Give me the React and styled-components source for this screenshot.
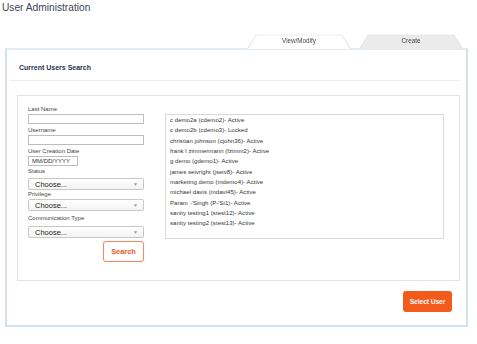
import React from "react";
import styled, { createGlobalStyle } from "styled-components";

const Global = createGlobalStyle`
  html, body { margin: 0; padding: 0; background: #fff; }
  body { font-family: "Liberation Sans", Arial, sans-serif; color: #333; }
  * { box-sizing: border-box; }
`;

const Page = styled.div`
  width: 477px;
  height: 344px;
  position: relative;
  overflow: hidden;
`;

const Title = styled.h1`
  margin: 0;
  padding: 1px 0 0 2px;
  height: 31px;
  font-size: 10.2px;
  line-height: 13px;
  font-weight: normal;
  color: #3b4657;
`;

const TabBar = styled.div`
  display: flex;
  justify-content: flex-end;
  gap: 8px;
  padding-right: 14px;
  height: 18px;
  position: relative;
  z-index: 1;
`;

const Tab = styled.div`
  position: relative;
  width: 104px;
  height: 18px;
  display: flex;
  align-items: center;
  justify-content: center;
  font-size: 6.3px;
  color: #444;
  padding-top: 1px;
  isolation: isolate;
  &::before {
    content: "";
    position: absolute;
    inset: 0;
    z-index: -1;
    background: ${(p) => (p.$active ? "#ffffff" : "#ebebeb")};
    border: 1px solid ${(p) => (p.$active ? "#e0e0e0" : "#dedede")};
    border-bottom: none;
    transform: perspective(24px) rotateX(16deg);
    transform-origin: bottom;
  }
`;

const Panel = styled.div`
  margin: -1px 9px 0 5px;
  height: 279px;
  border: 2px solid #d4e1ed;
  border-top: 2px solid #e4ecf3;
  background: #fff;
  display: flex;
  flex-direction: column;
  padding: 0 6px 0 10px;
`;

const PanelHeader = styled.div`
  height: 31px;
  display: flex;
  align-items: center;
  margin: 0 0 0 -8px;
  padding: 5px 0 0 10px;
  border-bottom: 1px solid #eeeeee;
  font-size: 7px;
  font-weight: bold;
  color: #1e3350;
`;

const Card = styled.div`
  margin-top: 14px;
  height: 186px;
  border: 1px solid #e2e2e2;
  display: flex;
  gap: 21px;
  padding: 9px 15px 0 10px;
`;

const Form = styled.div`
  width: 116px;
  display: flex;
  flex-direction: column;
`;

const Label = styled.label`
  display: block;
  font-size: 6px;
  line-height: 9px;
  height: 9px;
  color: #444;
`;

const Field = styled.div`
  display: flex;
  flex-direction: column;
  margin-bottom: ${(p) => p.$mb ?? 2}px;
`;

const TextInput = styled.div`
  width: ${(p) => p.$w || 116}px;
  height: 10px;
  border: 1px solid #bdbdbd;
  background: #fff;
  font-size: 6px;
  line-height: 8px;
  padding-left: 3px;
  color: #333;
`;

const Select = styled.div`
  width: 116px;
  height: 12px;
  margin-top: ${(p) => p.$mt ?? 1}px;
  border: 1px solid #c8c8c8;
  border-radius: 2px;
  background: linear-gradient(#ffffff, #f4f4f4);
  display: flex;
  align-items: center;
  justify-content: space-between;
  padding: 0 5px 0 6px;
  font-size: 7.5px;
  color: #222;
`;

const Caret = styled.span`
  font-size: 5px;
  color: #999;
`;

const ButtonRow = styled.div`
  display: flex;
  justify-content: flex-end;
  margin-top: 3px;
`;

const SearchButton = styled.button`
  width: 41px;
  height: 21px;
  border: 1px solid #f08a62;
  border-radius: 3px;
  background: #fff;
  color: #ea5a2a;
  font-family: inherit;
  font-size: 7.4px;
  font-weight: bold;
  padding: 0;
  box-shadow: 0 0 1px rgba(240, 130, 80, 0.4);
`;

const ListBox = styled.div`
  margin-top: 9px;
  width: 280px;
  height: 125px;
  border: 1px solid #dadada;
  padding: 0 4px;
`;

const ListItem = styled.div`
  font-size: 6px;
  line-height: 10.35px;
  height: 10.35px;
  color: #333;
  white-space: nowrap;
  letter-spacing: 0.05px;
`;

const Footer = styled.div`
  display: flex;
  justify-content: flex-end;
  padding: 10px 8px 0 0;
`;

const PrimaryButton = styled.button`
  width: 49px;
  height: 21px;
  border: none;
  border-radius: 3px;
  background: #f35b1d;
  color: #fff;
  font-family: inherit;
  font-size: 6.5px;
  font-weight: bold;
  padding: 0;
`;

const users = [
  "c demo2a (cdemo2)- Active",
  "c demo2b (cdemo3)- Locked",
  "christian johnson (cjohn36)- Active",
  "frank l zimmermann (fzimm2)- Active",
  "g demo (gdemo1)- Active",
  "james seivright (jseiv8)- Active",
  "marketing demo (mdemo4)- Active",
  "michael davis (mdavi45)- Active",
  "Param -'Singh (P-'Si1)- Active",
  "sanity testing1 (stest12)- Active",
  "sanity testing2 (stest13)- Active",
];

export default function App() {
  return (
    <Page>
      <Global />
      <Title>User Administration</Title>
      <TabBar>
        <Tab $active>View/Modify</Tab>
        <Tab>Create</Tab>
      </TabBar>
      <Panel>
        <PanelHeader>Current Users Search</PanelHeader>
        <Card>
          <Form>
            <Field>
              <Label>Last Name</Label>
              <TextInput />
            </Field>
            <Field>
              <Label>Username</Label>
              <TextInput />
            </Field>
            <Field $mb={1}>
              <Label>User Creation Date</Label>
              <TextInput $w={50}>MM/DD/YYYY</TextInput>
            </Field>
            <Field $mb={0}>
              <Label>Status</Label>
              <Select $mt={2}>
                Choose...<Caret>▼</Caret>
              </Select>
            </Field>
            <Field $mb={3}>
              <Label>Privilege</Label>
              <Select $mt={0}>
                Choose...<Caret>▼</Caret>
              </Select>
            </Field>
            <Field $mb={0}>
              <Label>Communication Type</Label>
              <Select $mt={3}>
                Choose...<Caret>▼</Caret>
              </Select>
            </Field>
            <ButtonRow>
              <SearchButton>Search</SearchButton>
            </ButtonRow>
          </Form>
          <ListBox>
            {users.map((u) => (
              <ListItem key={u}>{u}</ListItem>
            ))}
          </ListBox>
        </Card>
        <Footer>
          <PrimaryButton>Select User</PrimaryButton>
        </Footer>
      </Panel>
    </Page>
  );
}
